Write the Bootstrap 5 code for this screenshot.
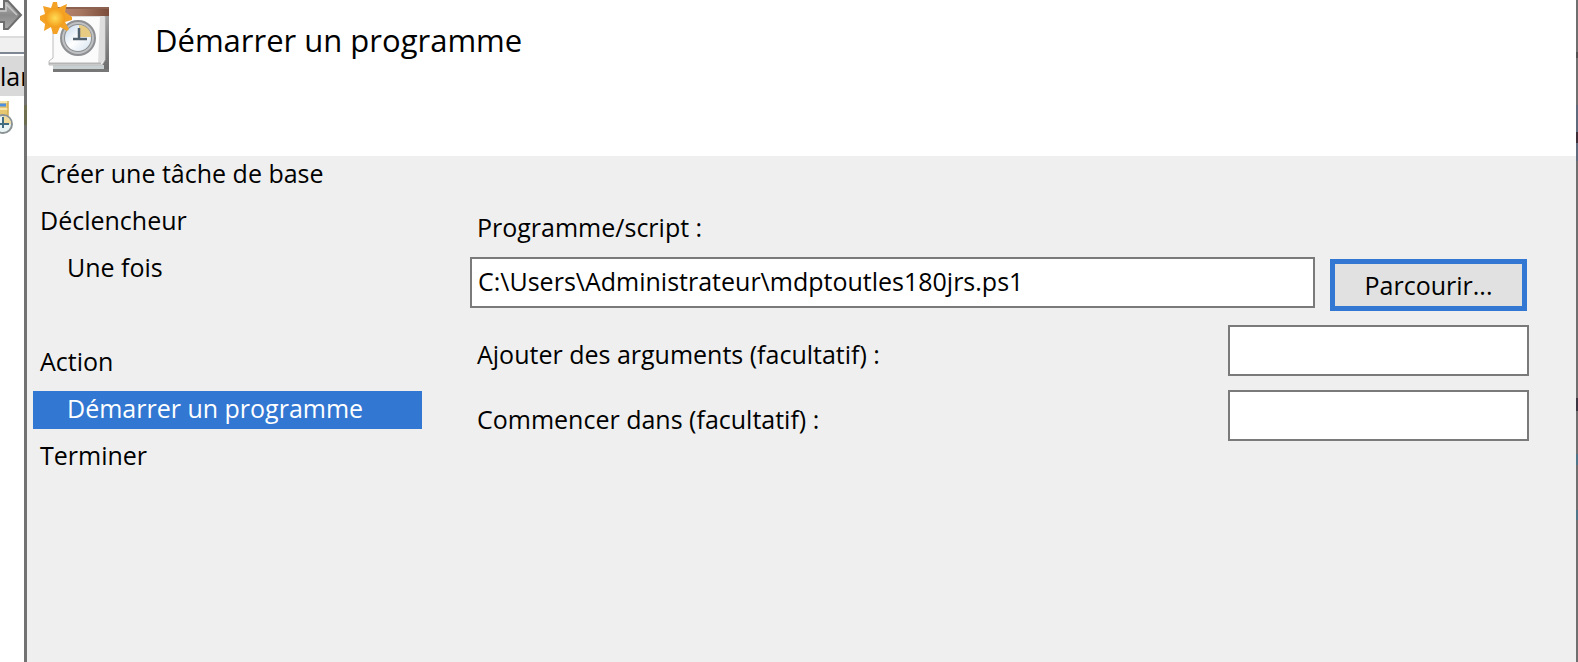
<!DOCTYPE html>
<html lang="fr">
<head>
<meta charset="utf-8">
<meta name="viewport" content="width=device-width, initial-scale=1">
<title>Créer une tâche de base</title>
<link href="https://cdn.jsdelivr.net/npm/bootstrap@5.3.0/dist/css/bootstrap.min.css" rel="stylesheet">
<style>
  body { font-family: "Open Sans", "Noto Sans", sans-serif; font-size: 25px; line-height: 34px; color: #000; background: #fff; }
  .behind { width: 24px; }
  .behind svg { display: block; }
  .tool-edge { height: 18px; background: #f0f0f0; border-top: 2px solid #dcdcdc; border-bottom: 2px solid #7f8794; }
  .column-title { height: 40px; margin: 2px 0 5px; background: #d9d9d9; line-height: 40px; white-space: nowrap; }
  .edge-left { width: 3px; background: linear-gradient(#727272 105px, #6c6c50 105px, #6c6c50 125px, #727272 125px); }
  .edge-right { width: 2px; background: linear-gradient(#6f6f6f 52px, #505050 52px, #505050 58px, #6f6f6f 58px, #6f6f6f 105px, #5f6b7c 105px, #5f6b7c 132px, #3e2e38 132px, #3e2e38 143px, #5f6b7c 143px, #5f6b7c 161px, #6f6f6f 161px, #6f6f6f 398px, #3a3540 398px, #3a3540 411px, #6f6f6f 411px, #6f6f6f 454px, #4f7688 454px, #4f7688 465px, #6f6f6f 465px, #6f6f6f 510px, #4f7688 510px, #4f7688 520px, #6f6f6f 520px); }
  .wizard { background: #efefef; min-width: 0; }
  .wizard-head { height: 156px; background: #fff; padding-left: 9px; }
  .wizard-head h1 { font-size: 31px; line-height: 44px; margin: 18px 0 0 43px; font-weight: 400; }
  .steps { width: 389px; margin-left: 6px; gap: 9px; }
  .steps a, .steps div { height: 38px; padding: 0 7px; color: #000; text-decoration: none; }
  .steps .sub { padding-left: 34px; }
  .steps .active { background: #3277d2; color: #fff; }
  .fields { margin: 52px 47px 0 48px; }
  .fields label { padding: 12px 0 0 7px; }
  .fields .top-label { height: 49px; padding-top: 2px; }
  .fields .line { margin-top: 14px; }
  .box { height: 51px; border: 2px solid #7a7a7a; border-radius: 0; padding: 0 6px 4px; font-size: inherit; line-height: 34px; color: #000; background: #fff; }
  .box-short { width: 301px; }
  .browse { width: 197px; height: 52px; margin: 2px 2px 0 15px; border: 5px solid #3277d2; border-radius: 0; background: #e1e1e1; padding: 0; font-size: inherit; line-height: 34px; color: #000; }
</style>
</head>
<body>
<div class="d-flex min-vh-100">
  <aside class="behind flex-shrink-0 overflow-hidden">
    <svg width="24" height="36" viewBox="0 0 24 36" aria-hidden="true">
      <defs><linearGradient id="arrow" x2="0" y2="1"><stop stop-color="#b5b5b5"/><stop offset=".5" stop-color="#8b8b8b"/><stop offset="1" stop-color="#a8a8a8"/></linearGradient></defs>
      <path d="M-2 9H4V1H8L21 15L8 29H4V22H-2Z" fill="url(#arrow)" stroke="#6e6e6e" stroke-width="2"/>
      <path d="M-2 11H6V4L17 15" fill="none" stroke="#c9c9c9" stroke-width="1.5"/>
    </svg>
    <div class="tool-edge"></div>
    <div class="column-title">lar</div>
    <svg width="24" height="34" viewBox="0 0 24 34" aria-hidden="true">
      <path d="M-1 0H8.500V16H-1Z" fill="#e6c66e"/>
      <path d="M-1 1H8M-1 8H8" stroke="#f7e6a8" stroke-width="2"/>
      <path d="M0 4H6" stroke="#4d8fe0" stroke-width="3"/>
      <path d="M8 0V15" stroke="#c59d43"/>
      <circle cx="3" cy="23" r="9" fill="#eaf4f5" stroke="#8b9294" stroke-width="2"/>
      <path d="M3 23V15A8 8 0 0 1 11 23Z" fill="#f0db9c"/>
      <path d="M3 16V23H9M3 23V27M-1 23H3" fill="none" stroke="#426c80" stroke-width="2"/>
    </svg>
  </aside>
  <div class="edge-left flex-shrink-0"></div>
  <main class="wizard flex-grow-1">
    <header class="wizard-head d-flex align-items-start">
      <svg class="flex-shrink-0" width="76" height="76" viewBox="0 0 76 76" aria-hidden="true">
        <defs>
          <linearGradient id="bar" x2="1" y2="0"><stop stop-color="#b98c78"/><stop offset=".5" stop-color="#a57560"/><stop offset="1" stop-color="#7b4c3a"/></linearGradient>
          <linearGradient id="shade" x2="1" y2="1"><stop stop-color="#d8d8d8"/><stop offset="1" stop-color="#686868"/></linearGradient>
          <linearGradient id="glass" x2="1" y2="1"><stop stop-color="#b9d0e8"/><stop offset=".5" stop-color="#fff"/><stop offset="1" stop-color="#cbdcec"/></linearGradient>
          <radialGradient id="sun"><stop stop-color="#ffdc55"/><stop offset="1" stop-color="#f39a18"/></radialGradient>
        </defs>
        <path d="M17 14H73V72H17Z" fill="url(#shade)"/>
        <path d="M17 70.500H73" stroke="#777" stroke-width="3"/>
        <path d="M17 65H68V69H17Z" fill="#c8d0d2"/>
        <path d="M17 16H69V60L66 65H13V61L17 58Z" fill="#fbfbfb" stroke="#bcbcbc"/>
        <path d="M64 16H68V60L65 64H62Z" fill="#dedede"/>
        <path d="M13 63.500H65" stroke="#b5b5b5" stroke-width="2"/>
        <path d="M18 7H73V16H18Z" fill="url(#bar)"/>
        <path d="M18 8H73" stroke="#8d6150" stroke-width="2"/>
        <circle cx="42" cy="38" r="15.500" fill="url(#glass)" stroke="#8d8f92" stroke-width="5"/>
        <circle cx="42" cy="38" r="15" fill="none" stroke="#bfc1c3" stroke-width="2"/>
        <path d="M43 37V25A12 12 0 0 1 55 37Z" fill="#e7cb82"/>
        <path d="M43 28V39H51M37 39H43" fill="none" stroke="#51616e" stroke-width="2.500"/>
        <path d="M17 2H21L22 8L31 4L29 12L36 17V20L29 22L33 29L31 31L24 27L21 34H17L15 27L8 31L9 24L4 20V16L9 14L7 6L15 8Z" fill="#f3a226"/>
        <circle cx="19" cy="18" r="10" fill="url(#sun)"/>
      </svg>
      <h1>Démarrer un programme</h1>
    </header>
    <div class="d-flex">
      <nav class="steps d-flex flex-column flex-shrink-0">
        <a href="#">Créer une tâche de base</a>
        <a href="#">Déclencheur</a>
        <a href="#" class="sub">Une fois</a>
        <div></div>
        <a href="#">Action</a>
        <a href="#" class="sub active" aria-current="step">Démarrer un programme</a>
        <a href="#">Terminer</a>
      </nav>
      <form class="fields flex-grow-1">
        <label for="prog" class="top-label d-block">Programme/script :</label>
        <div class="d-flex">
          <input id="prog" type="text" class="form-control box flex-grow-1" value="C:\Users\Administrateur\mdptoutles180jrs.ps1">
          <button type="button" class="btn browse flex-shrink-0">Parcourir...</button>
        </div>
        <div class="line d-flex justify-content-between">
          <label for="args">Ajouter des arguments (facultatif) :</label>
          <input id="args" type="text" class="form-control box box-short">
        </div>
        <div class="line d-flex justify-content-between">
          <label for="dir">Commencer dans (facultatif) :</label>
          <input id="dir" type="text" class="form-control box box-short">
        </div>
      </form>
    </div>
  </main>
  <div class="edge-right flex-shrink-0"></div>
</div>
<script src="https://cdn.jsdelivr.net/npm/bootstrap@5.3.0/dist/js/bootstrap.bundle.min.js"></script>
</body>
</html>
